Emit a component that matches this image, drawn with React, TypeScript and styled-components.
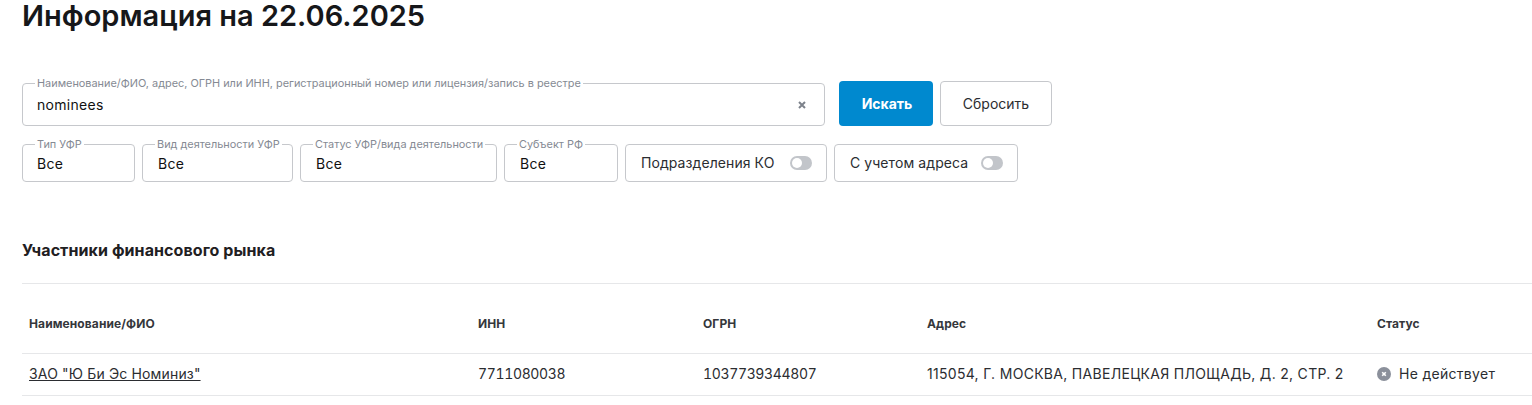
import React from "react";
import styled, { createGlobalStyle } from "styled-components";

const GlobalStyle = createGlobalStyle`
  html, body {
    margin: 0;
    padding: 0;
    background: #fff;
    overflow: hidden;
  }
  body {
    font-family: Inter, "Liberation Sans", sans-serif;
    color: #1f2022;
  }
`;

const Page = styled.main`
  width: 1532px;
  height: 405px;
  padding: 0 0 0 22px;
  box-sizing: border-box;
  overflow: hidden;
`;

const Title = styled.h1`
  margin: 0;
  height: 81px;
  font-size: 29px;
  line-height: 32px;
  font-weight: 600;
  color: #16171a;
`;

const SearchRow = styled.div`
  display: flex;
  align-items: flex-end;
  height: 45px;
`;

const FilterRow = styled.div`
  display: flex;
  gap: 7px;
  margin-top: 18px;
  height: 38px;
`;

const Field = styled.div<{ $width: number; $height: number; $inset: number }>`
  position: relative;
  width: ${(p) => p.$width}px;
  height: ${(p) => p.$height}px;
  box-sizing: border-box;
  border: 1px solid #c6c8cc;
  border-radius: 4px;
  display: flex;
  align-items: center;
  justify-content: space-between;
  padding: 1px 15px 0 ${(p) => p.$inset}px;
  background: #fff;
`;

const FieldLabel = styled.label`
  position: absolute;
  left: 12px;
  top: -7px;
  padding: 0 2px;
  background: #fff;
  font-size: 10.9px;
  line-height: 13px;
  color: #858a93;
  white-space: nowrap;
`;

const FieldValue = styled.span`
  font-size: 14px;
  line-height: 18px;
  letter-spacing: 0.3px;
  color: #111;
`;

const ClearIcon = styled.svg`
  width: 8px;
  height: 8px;
  margin-right: 3px;
  color: #7d828b;
`;

const PrimaryButton = styled.button`
  width: 94px;
  height: 45px;
  margin-left: 14px;
  border: 0;
  border-radius: 4px;
  background: #0089cf;
  color: #fff;
  font: 700 14px Inter, "Liberation Sans", sans-serif;
  padding: 0 0 0 2px;
`;

const SecondaryButton = styled.button`
  width: 112px;
  height: 45px;
  margin-left: 7px;
  border: 1px solid #c6c8cc;
  border-radius: 4px;
  background: #fff;
  color: #2b2d31;
  font: 400 14px Inter, "Liberation Sans", sans-serif;
`;

const ToggleBox = styled.div<{ $width: number }>`
  width: ${(p) => p.$width}px;
  height: 38px;
  box-sizing: border-box;
  border: 1px solid #c6c8cc;
  border-radius: 4px;
  display: flex;
  align-items: center;
  justify-content: space-between;
  padding: 0 14px 1px 15px;
  font-size: 14px;
  letter-spacing: 0.08px;
  color: #2b2d31;
`;

const Switch = styled.span`
  width: 22px;
  height: 14px;
  border-radius: 7px;
  background: #c2c5ca;
  display: flex;
  align-items: center;
  padding-left: 2px;
  box-sizing: border-box;

  &::before {
    content: "";
    width: 10px;
    height: 10px;
    border-radius: 50%;
    background: #fff;
  }
`;

const SectionTitle = styled.h2`
  margin: 58px 0 0;
  height: 43px;
  font-size: 16px;
  line-height: 20px;
  font-weight: 700;
  letter-spacing: 0.08px;
  color: #1f2022;
`;

const Table = styled.div`
  border-top: 1px solid #e6e7e9;
`;

const Row = styled.div<{ $height: number; $offset: number }>`
  display: grid;
  grid-template-columns: 449px 225px 224px 450px 1fr;
  align-items: center;
  height: ${(p) => p.$height}px;
  padding: ${(p) => (p.$offset > 0 ? p.$offset : 0)}px 0 ${(p) => (p.$offset < 0 ? -p.$offset : 0)}px 7px;
  border-bottom: 1px solid #e6e7e9;
  box-sizing: border-box;
`;

const HeadCell = styled.div`
  font-size: 12px;
  font-weight: 700;
  letter-spacing: 0.1px;
  color: #35373b;
`;

const Cell = styled.div`
  font-size: 14px;
  letter-spacing: 0.3px;
  color: #2b2d31;
  white-space: nowrap;
`;

const NumberCell = styled(Cell)`
  letter-spacing: -0.35px;
  font-variant-numeric: tabular-nums;
`;

const CompanyLink = styled.a`
  letter-spacing: 0.15px;
  color: #2b2d31;
  text-decoration: underline;
`;

const Status = styled(Cell)`
  display: flex;
  align-items: center;
  gap: 8px;
`;

const StatusIcon = styled.svg`
  width: 14px;
  height: 14px;
`;

const filters = [
  { label: "Тип УФР", width: 113, inset: 14 },
  { label: "Вид деятельности УФР", width: 151, inset: 15 },
  { label: "Статус УФР/вида деятельности", width: 197, inset: 15 },
  { label: "Субъект РФ", width: 114, inset: 15 },
];

export default function App() {
  return (
    <Page>
      <GlobalStyle />
      <Title>Информация на 22.06.2025</Title>
      <SearchRow>
        <Field $width={803} $height={43} $inset={14}>
          <FieldLabel>
            Наименование/ФИО, адрес, ОГРН или ИНН, регистрационный номер или
            лицензия/запись в реестре
          </FieldLabel>
          <FieldValue>nominees</FieldValue>
          <ClearIcon viewBox="0 0 8 8" aria-hidden="true">
            <path d="M1 1l6 6M7 1L1 7" stroke="currentColor" strokeWidth="2" />
          </ClearIcon>
        </Field>
        <PrimaryButton>Искать</PrimaryButton>
        <SecondaryButton>Сбросить</SecondaryButton>
      </SearchRow>
      <FilterRow>
        {filters.map((f) => (
          <Field key={f.label} $width={f.width} $height={38} $inset={f.inset}>
            <FieldLabel>{f.label}</FieldLabel>
            <FieldValue>Все</FieldValue>
          </Field>
        ))}
        <ToggleBox $width={202}>
          Подразделения КО
          <Switch />
        </ToggleBox>
        <ToggleBox $width={184}>
          С учетом адреса
          <Switch />
        </ToggleBox>
      </FilterRow>
      <SectionTitle>Участники финансового рынка</SectionTitle>
      <Table>
        <Row $height={70} $offset={10}>
          <HeadCell>Наименование/ФИО</HeadCell>
          <HeadCell>ИНН</HeadCell>
          <HeadCell>ОГРН</HeadCell>
          <HeadCell>Адрес</HeadCell>
          <HeadCell>Статус</HeadCell>
        </Row>
        <Row $height={42} $offset={-2}>
          <Cell>
            <CompanyLink href="#">ЗАО "Ю Би Эс Номиниз"</CompanyLink>
          </Cell>
          <NumberCell>7711080038</NumberCell>
          <NumberCell>1037739344807</NumberCell>
          <Cell>115054, Г. МОСКВА, ПАВЕЛЕЦКАЯ ПЛОЩАДЬ, Д. 2, СТР. 2</Cell>
          <Status>
            <StatusIcon viewBox="0 0 14 14" aria-hidden="true">
              <circle cx="7" cy="7" r="7" fill="#8b909b" />
              <path d="M5.2 5.2l3.6 3.6M8.8 5.2L5.2 8.8" stroke="#fff" strokeWidth="1.6" />
            </StatusIcon>
            Не действует
          </Status>
        </Row>
      </Table>
    </Page>
  );
}
